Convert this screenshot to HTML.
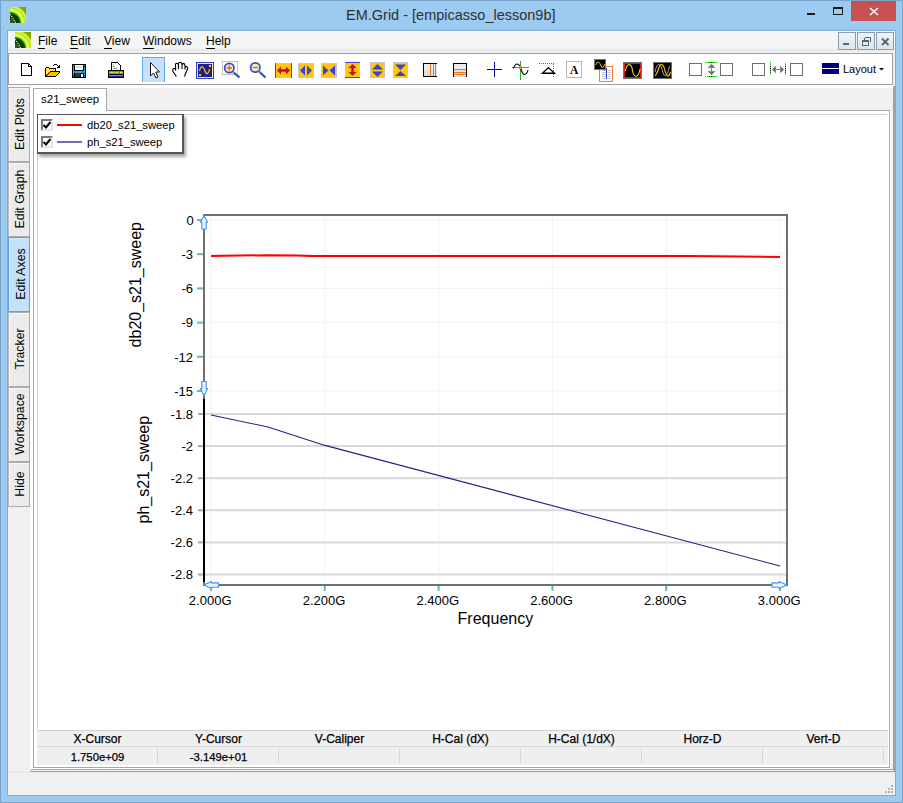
<!DOCTYPE html>
<html><head><meta charset="utf-8">
<style>
*{margin:0;padding:0;box-sizing:border-box}
html,body{width:903px;height:803px;overflow:hidden;background:#9ccbf2;font-family:"Liberation Sans",sans-serif}
.a{position:absolute}
#frame{left:0;top:0;width:903px;height:803px;border:1px solid #7ba2c8}
.ttl{left:346px;top:7px;font-size:14.5px;color:#303030;white-space:nowrap}
#client{left:8px;top:31px;width:887px;height:764px;background:#f0f0f0;box-shadow:0 0 0 1px #82abd3}
#menubar{left:8px;top:31px;width:887px;height:18px;background:#f4f5f7;border-top:1px solid #faf9f7}
#menuband{left:8px;top:48px;width:887px;height:5px;background:linear-gradient(#f0f1f2 0,#f0f1f2 1px,#e8e9e9 1px,#e8e9e9 3px,#f0f0f0 3px)}
.menu{top:34px;font-size:12px;color:#000;white-space:nowrap}
.menu u{text-decoration:none;border-bottom:1px solid #000}
#toolbar{left:8px;top:53px;width:885px;height:32px;background:#fff;border:1px solid #a0a0a0}
.mdib{top:32px;width:18px;height:18px;border:1px solid #8e9cac;background:linear-gradient(#eef3f8,#dae5f0)}
.vt{left:8px;width:22px;border:1px solid #acacac;border-left-color:#b8b8b8;background:#ebebeb;box-shadow:inset 1px 1px 0 #f8f8f8}
.vt span{position:absolute;left:calc(50% + 1px);top:calc(50% - 0.8px);transform:translate(-50%,-50%) rotate(-90deg);font-size:12.3px;white-space:nowrap;color:#000}
.cb{width:12px;height:12px;background:#fff;border:2px solid;border-color:#7a7a7a #e6e6e6 #e6e6e6 #7a7a7a}
.th{top:732px;font-size:12px;text-align:center;white-space:nowrap;-webkit-text-stroke:0.25px #000}
.td{top:750.5px;font-size:11.3px;text-align:center;white-space:nowrap;-webkit-text-stroke:0.25px #000}
</style></head>
<body>
<div class="a" id="frame"></div>
<!-- title icon -->
<div class="a" style="left:10px;top:7px;width:16px;height:16px;background:radial-gradient(circle at 0% 100%,#4a5a10 0px,#3a5010 4px,#003800 5.5px,#004a00 9.5px,#30b020 10.5px,#f0ff40 12px,#f8ff50 13.5px,#a0e020 15px,#e8ff40 16.5px,#80b000 18.5px,#78a000 23px)"></div>
<svg class="a" style="left:10px;top:7px" width="16" height="16"><path d="M0.3 7.3 L5.8 15.8" stroke="#f0f0f0" stroke-width="1.1" stroke-dasharray="1.2 1"/></svg>
<div class="a ttl">EM.Grid - [empicasso_lesson9b]</div>
<!-- caption buttons -->
<div class="a" style="left:807px;top:13px;width:8px;height:2px;background:#1a1a1a"></div>
<div class="a" style="left:833px;top:7px;width:10px;height:8px;border:1px solid #1a1a1a;border-top-width:2px"></div>
<div class="a" style="left:851px;top:1px;width:45px;height:20px;background:#c75050"></div>
<svg class="a" style="left:869px;top:7px" width="10" height="9"><path d="M1 1L9 8M9 1L1 8" stroke="#fff" stroke-width="1.6"/></svg>

<div class="a" id="client"></div>
<div class="a" id="menubar"></div>
<div class="a" id="menuband"></div>
<div class="a" style="left:15px;top:32px;width:16px;height:16px;background:radial-gradient(circle at 0% 100%,#4a5a10 0px,#3a5010 4px,#003800 5.5px,#004a00 9.5px,#30b020 10.5px,#f0ff40 12px,#f8ff50 13.5px,#a0e020 15px,#e8ff40 16.5px,#80b000 18.5px,#78a000 23px)"></div>
<svg class="a" style="left:15px;top:32px" width="16" height="16"><path d="M0.3 7.3 L5.8 15.8" stroke="#f0f0f0" stroke-width="1.1" stroke-dasharray="1.2 1"/></svg>
<div class="a menu" style="left:38px"><u>F</u>ile</div>
<div class="a menu" style="left:70px"><u>E</u>dit</div>
<div class="a menu" style="left:104px"><u>V</u>iew</div>
<div class="a menu" style="left:143px"><u>W</u>indows</div>
<div class="a menu" style="left:206px"><u>H</u>elp</div>
<div class="a mdib" style="left:838px"></div>
<div class="a mdib" style="left:857px"></div>
<div class="a mdib" style="left:876px"></div>
<svg class="a" style="left:830px;top:28px" width="70" height="26">
<rect x="13" y="15" width="6" height="2" fill="#5b6573"/>
<path d="M34.5 9.5 H40.5 V13.5 M34.5 9.5 V11.5 M32.5 12.5 H38.5 V17.5 H32.5 Z M32.5 13.5 H38.5" fill="none" stroke="#5b6573" stroke-width="1" shape-rendering="crispEdges"/>
<path d="M52 10.5 L58.5 17 M58.5 10.5 L52 17" stroke="#5b6573" stroke-width="1.8"/>
</svg>

<div class="a" id="toolbar"></div>
<svg class="a" style="left:0;top:0" width="903" height="90">
<g shape-rendering="crispEdges">
<!-- new doc -->
<path d="M21.5 63.5 H28.5 L31.5 66.5 V75.5 H21.5 Z" fill="#fff" stroke="#000" stroke-width="1"/>
<path d="M28.5 63.5 V66.5 H31.5" fill="none" stroke="#000" stroke-width="1"/>
<!-- open folder -->
</g><g shape-rendering="crispEdges"><rect x="54" y="64" width="3" height="1" fill="#000"/><rect x="53" y="65" width="1" height="1" fill="#000"/><rect x="57" y="65" width="1" height="1" fill="#000"/><rect x="59" y="65" width="1" height="1" fill="#000"/><rect x="58" y="66" width="2" height="1" fill="#000"/><rect x="46" y="67" width="3" height="1" fill="#000"/><rect x="57" y="67" width="3" height="1" fill="#000"/><rect x="45" y="68" width="1" height="1" fill="#000"/><rect x="46" y="68" width="1" height="1" fill="#f8cc30"/><rect x="47" y="68" width="1" height="1" fill="#fff"/><rect x="48" y="68" width="1" height="1" fill="#f8cc30"/><rect x="49" y="68" width="7" height="1" fill="#000"/><rect x="45" y="69" width="1" height="1" fill="#000"/><rect x="46" y="69" width="1" height="1" fill="#fff"/><rect x="47" y="69" width="1" height="1" fill="#f8cc30"/><rect x="48" y="69" width="1" height="1" fill="#fff"/><rect x="49" y="69" width="1" height="1" fill="#f8cc30"/><rect x="50" y="69" width="1" height="1" fill="#fff"/><rect x="51" y="69" width="1" height="1" fill="#f8cc30"/><rect x="52" y="69" width="1" height="1" fill="#fff"/><rect x="53" y="69" width="1" height="1" fill="#f8cc30"/><rect x="54" y="69" width="1" height="1" fill="#fff"/><rect x="55" y="69" width="1" height="1" fill="#000"/><rect x="45" y="70" width="1" height="1" fill="#000"/><rect x="46" y="70" width="1" height="1" fill="#f8cc30"/><rect x="47" y="70" width="1" height="1" fill="#fff"/><rect x="48" y="70" width="1" height="1" fill="#f8cc30"/><rect x="49" y="70" width="1" height="1" fill="#fff"/><rect x="50" y="70" width="1" height="1" fill="#f8cc30"/><rect x="51" y="70" width="1" height="1" fill="#fff"/><rect x="52" y="70" width="1" height="1" fill="#f8cc30"/><rect x="53" y="70" width="1" height="1" fill="#fff"/><rect x="54" y="70" width="1" height="1" fill="#f8cc30"/><rect x="55" y="70" width="1" height="1" fill="#000"/><rect x="45" y="71" width="1" height="1" fill="#000"/><rect x="46" y="71" width="1" height="1" fill="#fff"/><rect x="47" y="71" width="1" height="1" fill="#f8cc30"/><rect x="48" y="71" width="1" height="1" fill="#fff"/><rect x="49" y="71" width="1" height="1" fill="#f8cc30"/><rect x="50" y="71" width="10" height="1" fill="#000"/><rect x="45" y="72" width="1" height="1" fill="#000"/><rect x="46" y="72" width="1" height="1" fill="#f8cc30"/><rect x="47" y="72" width="1" height="1" fill="#fff"/><rect x="48" y="72" width="1" height="1" fill="#f8cc30"/><rect x="49" y="72" width="1" height="1" fill="#000"/><rect x="50" y="72" width="9" height="1" fill="#f8c000"/><rect x="59" y="72" width="1" height="1" fill="#000"/><rect x="45" y="73" width="1" height="1" fill="#000"/><rect x="46" y="73" width="1" height="1" fill="#fff"/><rect x="47" y="73" width="1" height="1" fill="#f8cc30"/><rect x="48" y="73" width="1" height="1" fill="#000"/><rect x="49" y="73" width="9" height="1" fill="#f8c000"/><rect x="58" y="73" width="1" height="1" fill="#000"/><rect x="45" y="74" width="1" height="1" fill="#000"/><rect x="46" y="74" width="1" height="1" fill="#f8cc30"/><rect x="47" y="74" width="1" height="1" fill="#000"/><rect x="48" y="74" width="9" height="1" fill="#f8c000"/><rect x="57" y="74" width="1" height="1" fill="#000"/><rect x="45" y="75" width="2" height="1" fill="#000"/><rect x="47" y="75" width="9" height="1" fill="#f8c000"/><rect x="56" y="75" width="1" height="1" fill="#000"/><rect x="45" y="76" width="11" height="1" fill="#000"/></g><g shape-rendering="crispEdges">
<!-- save -->
<rect x="72" y="64" width="14" height="14" fill="#000"/>
<rect x="73" y="65" width="1" height="10" fill="#1aa8e8"/>
<rect x="84" y="67" width="1" height="8" fill="#1aa8e8"/>
<rect x="73" y="71" width="12" height="2" fill="#1aa8e8"/>
<rect x="73" y="75" width="1" height="2" fill="#4848e8"/>
<rect x="84" y="75" width="1" height="2" fill="#4848e8"/>
<rect x="75" y="65" width="8" height="5" fill="#fff"/>
<rect x="76" y="66" width="6" height="2" fill="#dcdcdc"/>
<rect x="75" y="73" width="5" height="4" fill="#333"/>
<rect x="81" y="74" width="2" height="3" fill="#fff"/>
<rect x="84" y="65" width="1" height="1" fill="#888"/>
<!-- printer -->
<path d="M111.5 62.5 H117.5 L120.5 65.5 V70.5 H111.5 Z" fill="#fff" stroke="#000"/>
<rect x="113" y="64" width="1" height="1" fill="#999"/>
<rect x="113" y="66" width="2" height="1" fill="#999"/>
<rect x="113" y="68" width="4" height="1" fill="#999"/>
<rect x="108" y="70" width="16" height="8" fill="#000"/>
<rect x="109" y="71" width="14" height="1" fill="#10b0f0"/>
<rect x="109" y="72" width="10" height="1" fill="#b0e030"/>
<rect x="119" y="72" width="1" height="1" fill="#e82020"/>
<rect x="120" y="72" width="3" height="1" fill="#f8e000"/>
<rect x="109" y="73" width="14" height="1" fill="#10b0f0"/>
<rect x="109" y="75" width="14" height="1" fill="#6890d0"/>
<rect x="109" y="76" width="14" height="1" fill="#2828b8"/>
<!-- selected pointer button -->
<rect x="142" y="57" width="23" height="25" fill="#c6e1fa"/>
<rect x="142" y="57" width="23" height="1" fill="#66a6ea"/>
<rect x="142" y="57" width="1" height="25" fill="#66a6ea"/>
<rect x="164" y="57" width="1" height="25" fill="#66a6ea"/>
</g>
<path d="M150.5 62.5 V76 L153.5 73 L156 78 L158 77 L155.7 72 H159.5 Z" fill="#fff" stroke="#111" stroke-width="1" stroke-linejoin="miter"/>
<!-- hand -->
<path d="M176.4 76.5 L173 71.5 Q172 68.5 174.3 68.3 Q175.6 68.4 175.6 70.6 V66 Q175 63.2 176.8 63.2 Q178.3 63.4 178.5 65.5 V69 V64.2 Q178.8 62.3 180.4 62.3 Q181.8 62.6 182 64.5 V69 V65.5 Q182.2 63.3 183.6 63.4 Q185 63.8 185 66 V69.5 V67.5 Q185.5 66.3 186.8 66.6 Q188 67.2 187.6 69 L185.5 73.5 L184.5 76.5" fill="#fff" stroke="#000" stroke-width="1.1"/>
<g shape-rendering="crispEdges">
<!-- blue sine box -->
<rect x="196" y="62" width="18" height="17" fill="#3040c8"/>
<rect x="197" y="63" width="16" height="15" fill="#f0e8b0"/>
<rect x="198" y="64" width="14" height="13" fill="#20208c"/>
<rect x="209" y="65" width="2" height="2" fill="#f8d000"/>
<rect x="199" y="74" width="2" height="2" fill="#f8d000"/>
</g>
<path d="M199.5 71 Q200.5 66 202.5 67 Q204.5 68.5 205 71 Q206 74 207.5 73.5 Q209 72.5 209.5 69" fill="none" stroke="#f8d000" stroke-width="1.2"/>
<!-- zoom in -->
<rect x="222.5" y="61.5" width="15" height="13" fill="none" stroke="#c4c4c4" shape-rendering="crispEdges"/>
<line x1="233" y1="72" x2="239.5" y2="77.5" stroke="#3848c0" stroke-width="2.2"/>
<line x1="232.5" y1="71.5" x2="234" y2="73" stroke="#9ac040" stroke-width="1.6"/>
<circle cx="229.3" cy="68" r="4.7" fill="#f4ecc8" stroke="#3a4ac8" stroke-width="1.7"/>
<path d="M229.3 65.3 V70.7 M226.6 68 H232" stroke="#f06010" stroke-width="1.3"/>
<!-- zoom out -->
<line x1="259" y1="71.5" x2="265.5" y2="77.5" stroke="#3848c0" stroke-width="2.2"/>
<line x1="258.5" y1="71" x2="260" y2="72.5" stroke="#9ac040" stroke-width="1.6"/>
<circle cx="255.3" cy="67.5" r="4.7" fill="#f4ecc8" stroke="#3a4ac8" stroke-width="1.7"/>
<path d="M252.6 67.5 H258" stroke="#f06010" stroke-width="1.3"/>
<g shape-rendering="crispEdges">
<!-- yellow icons -->
<rect x="275" y="63" width="17" height="15" fill="#c8c8c8"/>
<rect x="276" y="64" width="15" height="13" fill="#ffc60a"/>
<rect x="275" y="63" width="1" height="15" fill="#3b44d8"/>
<rect x="291" y="63" width="1" height="15" fill="#3b44d8"/>
<rect x="298" y="63" width="16" height="15" fill="#c8c8c8"/>
<rect x="299" y="64" width="14" height="13" fill="#ffc60a"/>
<rect x="321" y="63" width="16" height="15" fill="#c8c8c8"/>
<rect x="322" y="64" width="14" height="13" fill="#ffc60a"/>
<rect x="345" y="62" width="15" height="16" fill="#c8c8c8"/>
<rect x="346" y="63" width="13" height="14" fill="#ffc60a"/>
<rect x="345" y="62" width="15" height="1" fill="#3b44d8"/>
<rect x="345" y="77" width="15" height="1" fill="#3b44d8"/>
<rect x="370" y="62" width="15" height="16" fill="#c8c8c8"/>
<rect x="371" y="63" width="13" height="14" fill="#ffc60a"/>
<rect x="393" y="62" width="15" height="16" fill="#c8c8c8"/>
<rect x="394" y="63" width="13" height="14" fill="#ffc60a"/>
</g>
<path d="M277 70.5 L281 66.5 V69.3 H286 V66.5 L290 70.5 L286 74.5 V71.7 H281 V74.5 Z" fill="#c81010"/>
<path d="M300 70.5 L305 65.5 V75.5 Z M312 70.5 L307 65.5 V75.5 Z" fill="#3b44d8"/>
<path d="M323 65.5 L328.5 70.5 L323 75.5 Z M335 65.5 L329.5 70.5 L335 75.5 Z" fill="#3b44d8"/>
<path d="M352.5 64 L356.5 68 H353.7 V72 H356.5 L352.5 76 L348.5 72 H351.3 V68 H348.5 Z" fill="#c81010"/>
<path d="M372 69.5 L377.5 64 L383 69.5 Z M372 71.5 H383 L377.5 77 Z" fill="#3b44d8"/>
<path d="M395 64.5 H406 L400.5 70 Z M395 76 H406 L400.5 71 Z" fill="#3b44d8"/>
<!-- vlines / hlines -->
<g shape-rendering="crispEdges">
<rect x="423" y="63" width="14" height="14" fill="#000"/>
<rect x="424" y="64" width="13" height="12" fill="#e0e0e0"/>
<rect x="424" y="64" width="13" height="6" fill="#ececec"/>
<rect x="430" y="64" width="1" height="12" fill="#f07820"/>
<rect x="433" y="64" width="1" height="12" fill="#f07820"/>
<rect x="435" y="64" width="1" height="12" fill="#f07820"/>
<rect x="453" y="63" width="14" height="14" fill="#000"/>
<rect x="454" y="64" width="12" height="13" fill="#e0e0e0"/>
<rect x="454" y="64" width="12" height="5" fill="#ececec"/>
<rect x="454" y="69" width="12" height="1" fill="#f07820"/>
<rect x="454" y="72" width="12" height="1" fill="#f07820"/>
<rect x="454" y="74" width="12" height="1" fill="#f07820"/>
<!-- crosshair -->
<rect x="487" y="69" width="15" height="1" fill="#000080"/>
<rect x="494" y="62" width="1" height="15" fill="#000080"/>
<!-- sine cross -->
<rect x="512" y="67" width="17" height="1" fill="#20b040"/>
<rect x="520" y="61" width="1" height="19" fill="#20b040"/>
</g>
<path d="M513.5 68.5 Q515 64 517 64 Q519 64 520.5 67.5 Q522.5 74.5 524.5 74.5 Q527 74.5 528 70" fill="none" stroke="#000" stroke-width="1.1"/>
<rect x="519" y="66" width="3" height="3" fill="#f07820"/>
<!-- triangle -->
<path d="M539 63.5 H554 M553.5 63.5 V78" stroke="#ff00ff" stroke-width="1" stroke-dasharray="1 1" shape-rendering="crispEdges"/>
<path d="M542.5 73.3 L548.4 67.6 L554.5 73.3 Z" fill="none" stroke="#000" stroke-width="1.4"/>
<!-- A box -->
<rect x="566.5" y="61.5" width="15" height="16" fill="#fff" stroke="#b8b8b8" shape-rendering="crispEdges"/>
<text x="574.2" y="74.3" font-family="Liberation Serif" font-weight="bold" font-size="11.5" text-anchor="middle" fill="#000">A</text>
<!-- scope + table -->
<g shape-rendering="crispEdges">
<rect x="599.5" y="66.5" width="13" height="15" fill="#fff" stroke="#f08030"/>
<rect x="602" y="70" width="4" height="1" fill="#c4c4c4"/><rect x="602" y="72" width="4" height="1" fill="#c4c4c4"/><rect x="602" y="74" width="4" height="1" fill="#c4c4c4"/><rect x="602" y="76" width="4" height="1" fill="#c4c4c4"/><rect x="602" y="78" width="4" height="1" fill="#c4c4c4"/>
<rect x="608" y="70" width="3" height="1" fill="#c4c4c4"/><rect x="608" y="72" width="3" height="1" fill="#c4c4c4"/><rect x="608" y="74" width="3" height="1" fill="#c4c4c4"/><rect x="608" y="76" width="3" height="1" fill="#c4c4c4"/><rect x="608" y="78" width="3" height="1" fill="#c4c4c4"/>
<rect x="606" y="68" width="1" height="11" fill="#3040d0"/>
<rect x="594" y="59" width="12" height="11" fill="#707070"/>
<rect x="595" y="60" width="10" height="9" fill="#000"/>
<!-- red scope -->
<rect x="623" y="62" width="19" height="17" fill="#707070"/>
<rect x="624" y="63" width="17" height="15" fill="#e01818"/>
<rect x="625" y="64" width="15" height="13" fill="#000"/>
<!-- dual scope -->
<rect x="653" y="62" width="19" height="17" fill="#707070"/>
<rect x="654" y="63" width="17" height="15" fill="#000"/>
</g>
<path d="M595.5 65 Q597 61.5 598.5 62 Q600 63 601 66 Q602 68.5 603.5 67 Q604.5 65.5 605 64" fill="none" stroke="#f8d000" stroke-width="1"/>
<path d="M625.3 71 Q626.5 64.5 629.3 64.5 Q631.8 64.8 632.5 70.5 Q633.5 76.5 636 76.3 Q639 76 640 69" fill="none" stroke="#f8e000" stroke-width="1.1"/>
<path d="M655 72 Q656.5 64 659 64.5 Q661.5 65 662.5 71 Q663.5 76 665.5 76 Q667.5 75.5 669.5 66" fill="none" stroke="#a0a0a0" stroke-width="1"/>
<path d="M655 76 Q657.5 73 658.5 69 Q660.5 63.5 662 64.5 Q664 65.5 665 71 Q666.5 76 668 76 Q669.5 76 670.5 72" fill="none" stroke="#f8c000" stroke-width="1.1"/>
<!-- checkbox squares -->
<g fill="#fff" stroke="#6e6e6e" stroke-width="1.2" shape-rendering="crispEdges">
<rect x="689.5" y="63.5" width="12" height="12"/>
<rect x="720.5" y="63.5" width="12" height="12"/>
<rect x="752.5" y="63.5" width="12" height="12"/>
<rect x="790.5" y="63.5" width="12" height="12"/>
</g>
<!-- v arrow -->
<g shape-rendering="crispEdges">
<rect x="705" y="62" width="13" height="1" fill="#40ee30"/>
<rect x="707" y="76" width="11" height="1" fill="#40ee30"/>
<rect x="705" y="76" width="1" height="1" fill="#40ee30"/>
<rect x="709" y="62" width="1" height="1" fill="#206020"/><rect x="711" y="62" width="1" height="1" fill="#000"/><rect x="713" y="62" width="1" height="1" fill="#206020"/>
<rect x="709" y="76" width="1" height="1" fill="#206020"/><rect x="711" y="76" width="1" height="1" fill="#000"/><rect x="713" y="76" width="1" height="1" fill="#206020"/>
<rect x="770" y="62" width="1" height="13" fill="#40ee30"/>
<rect x="785" y="63" width="1" height="12" fill="#40ee30"/>
<rect x="770" y="68" width="1" height="1" fill="#000"/><rect x="770" y="70" width="1" height="1" fill="#000"/><rect x="770" y="66" width="1" height="1" fill="#206020"/><rect x="770" y="72" width="1" height="1" fill="#206020"/>
<rect x="785" y="68" width="1" height="1" fill="#000"/><rect x="785" y="70" width="1" height="1" fill="#000"/><rect x="785" y="66" width="1" height="1" fill="#206020"/><rect x="785" y="72" width="1" height="1" fill="#206020"/>
</g>
<path d="M711.5 64 L715.5 67.8 H707.5 Z M711.5 75 L715.5 71.2 H707.5 Z" fill="#6a6a6a"/>
<rect x="711" y="67.5" width="1" height="4" fill="#808080"/>
<path d="M772 69.5 L775.8 65.8 V73.2 Z M784 69.5 L780.2 65.8 V73.2 Z" fill="#6a6a6a"/>
<rect x="775.5" y="69" width="5" height="1" fill="#808080"/>
<!-- layout -->
<rect x="822" y="63" width="17" height="5" fill="#000080" shape-rendering="crispEdges"/>
<rect x="822" y="69" width="17" height="5" fill="#000080" shape-rendering="crispEdges"/>
<path d="M879 68 H884 L881.5 70.5 Z" fill="#000"/>
</svg>
<div class="a" style="left:843px;top:63px;font-size:11px;white-space:nowrap">Layout</div>


<!-- vertical tabs -->
<div class="a vt" style="top:87px;height:75px"><span>Edit Plots</span></div>
<div class="a vt" style="top:162px;height:75px"><span>Edit Graph</span></div>
<div class="a vt" style="top:237px;height:75px;background:#c5e0f9;border:1px solid #5c9fe6;box-shadow:inset 1px 1px 0 #dbecfc"><span style="left:calc(50% + 2px);top:calc(50% - 0.5px)">Edit Axes</span></div>
<div class="a vt" style="top:312px;height:75px"><span>Tracker</span></div>
<div class="a vt" style="top:387px;height:75px"><span>Workspace</span></div>
<div class="a vt" style="top:462px;height:45px"><span>Hide</span></div>


<!-- MDI child frame -->
<div class="a" style="left:8px;top:85px;width:885px;height:2px;background:#fafafa"></div>
<div class="a" style="left:30px;top:85px;width:863px;height:684px;background:#fff"></div>
<div class="a" style="left:33px;top:88px;width:860px;height:680px;background:#f0f0f0"></div>
<div class="a" style="left:890px;top:111px;width:3px;height:658px;background:linear-gradient(90deg,#fff 1px,#f2f2f2 1px)"></div>
<div class="a" style="left:31px;top:769px;width:863px;height:1px;background:#a8a8a8"></div>
<div class="a" style="left:30px;top:771px;width:865px;height:1px;background:#a0a0a0"></div>
<div class="a" style="left:893px;top:86px;width:1px;height:684px;background:#a0a0a0"></div>
<div class="a" style="left:894px;top:86px;width:1px;height:686px;background:#a0a0a0"></div>
<div class="a" style="left:8px;top:772px;width:887px;height:1px;background:#e6e6e6"></div>
<!-- panel -->
<div class="a" style="left:33px;top:110px;width:857px;height:658px;background:#fff;border:1px solid #a8a8a8"></div>
<div class="a" style="left:33px;top:88px;width:74px;height:23px;background:#fff;border:1px solid #a8a8a8;border-bottom:none"></div>
<div class="a" style="left:41px;top:93px;font-size:11.5px;white-space:nowrap">s21_sweep</div>
<!-- canvas lines -->
<div class="a" style="left:37px;top:114px;width:850px;height:1px;background:#cfcfcf"></div>
<div class="a" style="left:37px;top:114px;width:1px;height:615px;background:#cfcfcf"></div>
<!-- legend -->
<div class="a" style="left:37px;top:114px;width:147px;height:40px;background:#fff;border:1px solid #555;border-right-width:2px;border-bottom-width:2px;box-shadow:2px 3px 3px rgba(0,0,0,0.35)"></div>
<div class="a cb" style="left:41px;top:119px"></div>
<div class="a cb" style="left:41px;top:136px"></div>
<svg class="a" style="left:41px;top:119px" width="12" height="30"><path d="M2.5 6 L5 8.5 L9.5 3" fill="none" stroke="#000" stroke-width="2"/><path d="M2.5 23 L5 25.5 L9.5 20" fill="none" stroke="#000" stroke-width="2"/></svg>
<div class="a" style="left:57px;top:124px;width:25px;height:2px;background:#ff0000"></div>
<div class="a" style="left:57px;top:141px;width:25px;height:2px;background:#7070b8"></div>
<div class="a" style="left:87px;top:119px;font-size:11.2px;white-space:nowrap">db20_s21_sweep</div>
<div class="a" style="left:87px;top:136px;font-size:11.2px;white-space:nowrap">ph_s21_sweep</div>
<svg class="a" style="left:0;top:0" width="903" height="803">
<line x1="211.0" y1="216" x2="211.0" y2="584" stroke="#e6e6e6" stroke-width="1" stroke-dasharray="1 1"/>
<line x1="324.8" y1="216" x2="324.8" y2="584" stroke="#e6e6e6" stroke-width="1" stroke-dasharray="1 1"/>
<line x1="438.6" y1="216" x2="438.6" y2="584" stroke="#e6e6e6" stroke-width="1" stroke-dasharray="1 1"/>
<line x1="552.4" y1="216" x2="552.4" y2="584" stroke="#e6e6e6" stroke-width="1" stroke-dasharray="1 1"/>
<line x1="666.2" y1="216" x2="666.2" y2="584" stroke="#e6e6e6" stroke-width="1" stroke-dasharray="1 1"/>
<line x1="780.0" y1="216" x2="780.0" y2="584" stroke="#e6e6e6" stroke-width="1" stroke-dasharray="1 1"/>
<line x1="209" y1="220.0" x2="786" y2="220.0" stroke="#e6e6e6" stroke-width="1" stroke-dasharray="1 1"/>
<line x1="209" y1="254.2" x2="786" y2="254.2" stroke="#e6e6e6" stroke-width="1" stroke-dasharray="1 1"/>
<line x1="209" y1="288.4" x2="786" y2="288.4" stroke="#e6e6e6" stroke-width="1" stroke-dasharray="1 1"/>
<line x1="209" y1="322.6" x2="786" y2="322.6" stroke="#e6e6e6" stroke-width="1" stroke-dasharray="1 1"/>
<line x1="209" y1="356.8" x2="786" y2="356.8" stroke="#e6e6e6" stroke-width="1" stroke-dasharray="1 1"/>
<line x1="209" y1="391.0" x2="786" y2="391.0" stroke="#e6e6e6" stroke-width="1" stroke-dasharray="1 1"/>
<line x1="205" y1="414.0" x2="786" y2="414.0" stroke="#d9d9d9" stroke-width="2"/>
<line x1="198" y1="414.0" x2="203" y2="414.0" stroke="#a8a8a8" stroke-width="2"/>
<line x1="205" y1="446.1" x2="786" y2="446.1" stroke="#d9d9d9" stroke-width="2"/>
<line x1="198" y1="446.1" x2="203" y2="446.1" stroke="#a8a8a8" stroke-width="2"/>
<line x1="205" y1="478.2" x2="786" y2="478.2" stroke="#d9d9d9" stroke-width="2"/>
<line x1="198" y1="478.2" x2="203" y2="478.2" stroke="#a8a8a8" stroke-width="2"/>
<line x1="205" y1="510.3" x2="786" y2="510.3" stroke="#d9d9d9" stroke-width="2"/>
<line x1="198" y1="510.3" x2="203" y2="510.3" stroke="#a8a8a8" stroke-width="2"/>
<line x1="205" y1="542.4" x2="786" y2="542.4" stroke="#d9d9d9" stroke-width="2"/>
<line x1="198" y1="542.4" x2="203" y2="542.4" stroke="#a8a8a8" stroke-width="2"/>
<line x1="205" y1="574.5" x2="786" y2="574.5" stroke="#d9d9d9" stroke-width="2"/>
<line x1="198" y1="574.5" x2="203" y2="574.5" stroke="#a8a8a8" stroke-width="2"/>
<line x1="197" y1="220.0" x2="203" y2="220.0" stroke="#6fb3b0" stroke-width="2"/>
<line x1="197" y1="254.2" x2="203" y2="254.2" stroke="#6fb3b0" stroke-width="2"/>
<line x1="197" y1="288.4" x2="203" y2="288.4" stroke="#6fb3b0" stroke-width="2"/>
<line x1="197" y1="322.6" x2="203" y2="322.6" stroke="#6fb3b0" stroke-width="2"/>
<line x1="197" y1="356.8" x2="203" y2="356.8" stroke="#6fb3b0" stroke-width="2"/>
<line x1="197" y1="391.0" x2="203" y2="391.0" stroke="#6fb3b0" stroke-width="2"/>
<line x1="211.0" y1="586" x2="211.0" y2="591" stroke="#6fb3b0" stroke-width="2"/>
<line x1="324.8" y1="586" x2="324.8" y2="591" stroke="#6fb3b0" stroke-width="2"/>
<line x1="438.6" y1="586" x2="438.6" y2="591" stroke="#6fb3b0" stroke-width="2"/>
<line x1="552.4" y1="586" x2="552.4" y2="591" stroke="#6fb3b0" stroke-width="2"/>
<line x1="666.2" y1="586" x2="666.2" y2="591" stroke="#6fb3b0" stroke-width="2"/>
<line x1="780.0" y1="586" x2="780.0" y2="591" stroke="#6fb3b0" stroke-width="2"/>
<rect x="204" y="215" width="583" height="370" fill="none" stroke="#707070" stroke-width="2"/>
<line x1="204" y1="399" x2="204" y2="582" stroke="#000" stroke-width="2"/>
<polyline points="211,256 240,255.6 268,255.2 296,255.5 312,256 690,256 780,257" fill="none" stroke="#ff0000" stroke-width="2"/>
<polyline points="211,415 268,427 325,445.4 780,566" fill="none" stroke="#20208a" stroke-width="1.1"/>
<path d="M204 215.8 L207.6 222.2 L206.2 222.2 L206.2 229 L201.8 229 L201.8 222.2 L200.4 222.2 Z" fill="#f4f0ea" stroke="#3399ff" stroke-width="1.15" stroke-linejoin="round"/>
<path d="M204 395.7 L207.6 388.6 L206.2 388.6 L206.2 381.5 L201.8 381.5 L201.8 388.6 L200.4 388.6 Z" fill="#f4f0ea" stroke="#3399ff" stroke-width="1.15" stroke-linejoin="round"/>
<path d="M203.8 585 L211.3 581.4 L211.3 582.8 L218.5 582.8 L218.5 587.2 L211.3 587.2 L211.3 588.6 Z" fill="#f4f0ea" stroke="#3399ff" stroke-width="1.15" stroke-linejoin="round"/>
<path d="M786.7 585 L779.2 581.4 L779.2 582.8 L772 582.8 L772 587.2 L779.2 587.2 L779.2 588.6 Z" fill="#f4f0ea" stroke="#3399ff" stroke-width="1.15" stroke-linejoin="round"/>
<g font-family="Liberation Sans" font-size="13" fill="#000">
<text x="193.8" y="224.7" text-anchor="end">0</text>
<text x="193" y="258.9" text-anchor="end">-3</text>
<text x="193" y="293.1" text-anchor="end">-6</text>
<text x="193" y="327.3" text-anchor="end">-9</text>
<text x="193" y="361.5" text-anchor="end">-12</text>
<text x="193" y="395.7" text-anchor="end">-15</text>
<text x="193" y="418.7" text-anchor="end">-1.8</text>
<text x="193" y="450.8" text-anchor="end">-2</text>
<text x="193" y="482.9" text-anchor="end">-2.2</text>
<text x="193" y="515.0" text-anchor="end">-2.4</text>
<text x="193" y="547.1" text-anchor="end">-2.6</text>
<text x="193" y="579.2" text-anchor="end">-2.8</text>
<text x="210.2" y="604.5" text-anchor="middle">2.000G</text>
<text x="324.0" y="604.5" text-anchor="middle">2.200G</text>
<text x="437.8" y="604.5" text-anchor="middle">2.400G</text>
<text x="551.6" y="604.5" text-anchor="middle">2.600G</text>
<text x="665.4" y="604.5" text-anchor="middle">2.800G</text>
<text x="779.2" y="604.5" text-anchor="middle">3.000G</text>
</g>
<g font-family="Liberation Sans" font-size="16" fill="#000">
<text x="495.4" y="624" text-anchor="middle">Frequency</text>
<text transform="translate(141,284.7) rotate(-90)" text-anchor="middle">db20_s21_sweep</text>
<text transform="translate(148.6,469.7) rotate(-90)" text-anchor="middle">ph_s21_sweep</text>
</g>
</svg>
<!-- table -->
<div class="a" style="left:37px;top:730px;width:851px;height:35px;background:#efefef;border-top:1px solid #d0d0d0"></div>
<div class="a" style="left:37px;top:746px;width:851px;height:1px;background:#d8d8d8"></div>
<div class="a th" style="left:37px;width:121px">X-Cursor</div>
<div class="a td" style="left:37px;width:121px">1.750e+09</div>
<div class="a" style="left:157px;top:748px;width:1px;height:15px;background:#d8d8d8"></div>
<div class="a th" style="left:158px;width:121px">Y-Cursor</div>
<div class="a td" style="left:158px;width:121px">-3.149e+01</div>
<div class="a" style="left:278px;top:748px;width:1px;height:15px;background:#d8d8d8"></div>
<div class="a th" style="left:279px;width:121px">V-Caliper</div>
<div class="a" style="left:399px;top:748px;width:1px;height:15px;background:#d8d8d8"></div>
<div class="a th" style="left:400px;width:121px">H-Cal (dX)</div>
<div class="a" style="left:520px;top:748px;width:1px;height:15px;background:#d8d8d8"></div>
<div class="a th" style="left:521px;width:121px">H-Cal (1/dX)</div>
<div class="a" style="left:641px;top:748px;width:1px;height:15px;background:#d8d8d8"></div>
<div class="a th" style="left:642px;width:121px">Horz-D</div>
<div class="a" style="left:762px;top:748px;width:1px;height:15px;background:#d8d8d8"></div>
<div class="a th" style="left:763px;width:121px">Vert-D</div>
<div class="a" style="left:883px;top:748px;width:1px;height:15px;background:#d8d8d8"></div>
<!-- status grip -->
<div class="a" style="left:891px;top:785px;width:2px;height:2px;background:#b4b4b4"></div>
<div class="a" style="left:888px;top:788px;width:2px;height:2px;background:#b4b4b4"></div>
<div class="a" style="left:891px;top:788px;width:2px;height:2px;background:#b4b4b4"></div>
<div class="a" style="left:885px;top:791px;width:2px;height:2px;background:#b4b4b4"></div>
<div class="a" style="left:888px;top:791px;width:2px;height:2px;background:#b4b4b4"></div>
<div class="a" style="left:891px;top:791px;width:2px;height:2px;background:#b4b4b4"></div>
</body></html>
